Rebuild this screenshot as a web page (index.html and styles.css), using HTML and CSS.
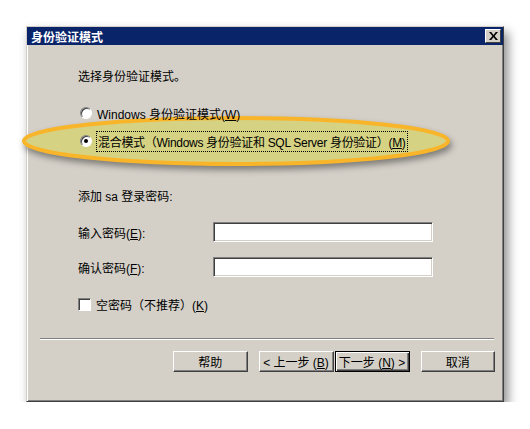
FILE: index.html
```html
<!DOCTYPE html>
<html lang="zh-CN">
<head>
    <meta charset="UTF-8">
    <title>身份验证模式</title>
    <link rel="stylesheet" href="styles.css">
</head>
<body>
    <div class="dialog">
        <div class="title-bar">
            <span class="title-text">身份验证模式</span>
            <span class="close-btn">
                <svg width="9" height="8" viewBox="0 0 8 7"><path d="M0 0h2l2 2.5 2-2.5h2L5 3.5 8 7H6L4 4.5 2 7H0l3-3.5z" fill="#000"/></svg>
            </span>
        </div>

        <div class="content">
            <!-- marker drawn over the screenshot -->
            <svg class="highlight" width="440" height="60" viewBox="0 0 440 60">
                <ellipse cx="220" cy="26" rx="212" ry="23" fill="#d5d283" stroke="#f9b52a" stroke-width="4"/>
            </svg>

            <div class="row intro">选择身份验证模式。</div>

            <label class="row radio-row first">
                <span class="radio"></span>
                <span>Windows 身份验证模式(<u>W</u>)</span>
            </label>
            <label class="row radio-row second">
                <span class="radio checked"></span>
                <span class="focus">混合模式（Windows 身份验证和 SQL Server 身份验证）(<u>M</u>)</span>
            </label>

            <div class="row section">添加 sa 登录密码:</div>

            <div class="row field-row">
                <span class="field-label">输入密码(<u>E</u>):</span>
                <span class="field"></span>
            </div>
            <div class="row field-row second-field">
                <span class="field-label">确认密码(<u>F</u>):</span>
                <span class="field"></span>
            </div>

            <label class="row check-row">
                <span class="checkbox"></span>
                <span>空密码（不推荐）(<u>K</u>)</span>
            </label>
        </div>

        <div class="separator"></div>

        <div class="buttons">
            <button class="btn">帮助</button>
            <div class="nav">
                <button class="btn">&lt; 上一步 (<u>B</u>)</button>
                <button class="btn btn-default">下一步 (<u>N</u>) &gt;</button>
            </div>
            <button class="btn">取消</button>
        </div>
    </div>
</body>
</html>
```

FILE: styles.css
```css
body {
    margin: 0;
    padding: 26px 0 0 26px;
    background: #fff;
    font-family: "Liberation Sans", "Noto Sans CJK SC", sans-serif;
    font-size: 12px;
    color: #000;
}

.dialog {
    width: 478px;
    height: 376px;
    box-sizing: border-box;
    background: #d4d0c8;
    border: 1px solid;
    border-color: #d4d0c8 #404040 #404040 #d4d0c8;
    box-shadow: inset 1px 1px 0 #fff, inset -1px -1px 0 #808080, 4px 6px 10px rgba(0,0,0,0.45);
    position: relative;
}

.title-bar {
    height: 18px;
    background: #0a246a;
    color: #fff;
    display: flex;
    align-items: center;
    justify-content: space-between;
    padding: 0 2px 0 4px;
}

.title-text {
    font-weight: bold;
    font-size: 12px;
}

.close-btn {
    width: 14px;
    height: 12px;
    background: #d4d0c8;
    border: 1px solid;
    border-color: #fff #404040 #404040 #fff;
    display: flex;
    align-items: center;
    justify-content: center;
}

.content {
    position: relative;
    padding: 0 0 0 51px;
    height: 293px;
}

.highlight {
    position: absolute;
    left: -11px;
    top: 70px;
    z-index: 0;
    filter: drop-shadow(2px 4px 3px rgba(0,0,0,0.4));
}

.row {
    position: relative;
    z-index: 1;
    display: flex;
    align-items: center;
    height: 16px;
}

.intro { padding-top: 22px; }
.radio-row.first { margin-top: 22px; margin-left: 2px; }
.radio-row.second { margin-top: 11px; height: 18px; margin-left: 2px; }
.section { margin-top: 37px; }

.radio {
    width: 12px;
    height: 12px;
    box-sizing: border-box;
    border-radius: 50%;
    background: #fff;
    border: 1px solid;
    border-color: #808080 #fff #fff #808080;
    box-shadow: inset 1px 1px 0 #404040;
    margin-right: 5px;
    display: flex;
    align-items: center;
    justify-content: center;
}

.radio.checked::after {
    content: "";
    width: 4px;
    height: 4px;
    border-radius: 50%;
    background: #000;
}

.focus {
    outline: 1px dotted #000;
    padding: 1px 1px;
    letter-spacing: -0.3px;
}

.field-row {
    height: 20px;
    margin-top: 19px;
}

.field-row.second-field { margin-top: 15px; }

.field-label {
    width: 135px;
}

.field {
    width: 220px;
    height: 20px;
    box-sizing: border-box;
    background: #fff;
    border: 1px solid;
    border-color: #808080 #fff #fff #808080;
    box-shadow: inset 1px 1px 0 #404040, inset -1px -1px 0 #d4d0c8;
}

.check-row {
    margin-top: 19px;
}

.checkbox {
    width: 13px;
    height: 13px;
    box-sizing: border-box;
    background: #fff;
    border: 1px solid;
    border-color: #808080 #fff #fff #808080;
    box-shadow: inset 1px 1px 0 #404040;
    margin-right: 5px;
}

u { text-decoration: underline; }

.separator {
    margin: 0 9px 0 13px;
    border-top: 1px solid #808080;
    border-bottom: 1px solid #fff;
}

.buttons {
    display: flex;
    margin: 11px 8px 0 146px;
    gap: 11px;
}

.nav {
    display: flex;
    gap: 1px;
}

.btn {
    width: 75px;
    height: 21px;
    padding: 0;
    background: #d4d0c8;
    font-family: inherit;
    font-size: 12px;
    color: #000;
    border: 1px solid;
    border-color: #fff #404040 #404040 #fff;
    box-shadow: inset -1px -1px 0 #808080;
}

.btn-default {
    border: 1px solid #000;
    box-shadow: inset 1px 1px 0 #fff, inset -1px -1px 0 #404040, inset -2px -2px 0 #808080;
}
```
